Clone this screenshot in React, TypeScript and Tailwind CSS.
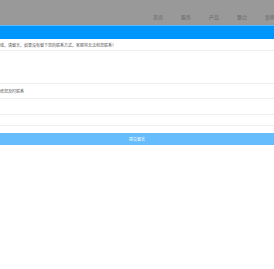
import React from "react";

const navItems = ["首页", "服务", "产品", "整合", "案例"];

export default function App() {
  return (
    <div
      className="w-[274px] h-[269px] overflow-hidden bg-white"
      style={{ fontFamily: '"Noto Sans CJK SC", "Liberation Sans", sans-serif' }}
    >
      {/* header */}
      <div className="h-[25px] bg-[#999999] flex items-end pb-[6px]">
        <ul className="flex gap-[20px] ml-[153px] text-[5px] leading-[5px] text-[#666666] whitespace-nowrap">
          {navItems.map((n) => (
            <li key={n} className="w-[8px]">
              {n}
            </li>
          ))}
        </ul>
      </div>
      <div className="h-[1px] bg-[#5ab8ff]" />
      <div className="h-[13px] bg-[#0096ff]" />

      {/* form */}
      <div className="h-[12px] border-b border-[#eeeeee] flex items-center text-[4px] text-[#555555] whitespace-nowrap">
        线，请留言，如果没有留下您的联系方式，客服将无法和您联系！
      </div>
      <div className="h-[33px] border-b border-[#eeeeee]" />
      <div className="h-[15px] border-b border-[#eeeeee] flex items-center text-[4px] text-[#555555] whitespace-nowrap">
        给您及时联系
      </div>
      <div className="h-[16px] border-b border-[#eeeeee]" />
      <div className="h-[11px] border-b border-[#eeeeee]" />

      <div className="mt-[7px] h-[12px] bg-[#66bdfd] flex items-center justify-center text-[4px] text-white">
        提交留言
      </div>
    </div>
  );
}
